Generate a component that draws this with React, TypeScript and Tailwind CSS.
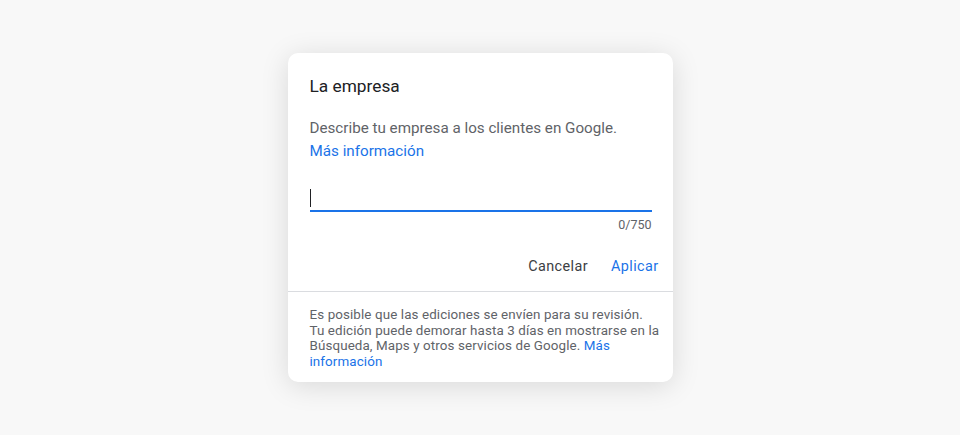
export default function App() {
  return (
    <div
      className="min-h-[435px] bg-[#f8f8f8] flex justify-center pt-[53px]"
      style={{ fontFamily: "Roboto, 'Liberation Sans', sans-serif" }}
    >
      <div className="w-[385px] h-[329px] bg-white rounded-[10px] shadow-[0_4px_28px_rgba(0,0,0,0.13)] flex flex-col">
        <div className="pl-[22px] pr-[21px] pt-[21px]">
          <h2 className="text-[17.3px] leading-6 text-[#202124]">La empresa</h2>
          <p className="mt-[19px] text-[15.2px] leading-[23px] text-[#5f6368]">
            Describe tu empresa a los clientes en Google.
            <br />
            <a className="text-[#1a73e8]">Más información</a>
          </p>
          {/* campo de texto */}
          <div className="mt-[20px] h-[29px] border-b-2 border-[#1a73e8] flex items-start">
            <span className="mt-[6px] w-[1.5px] h-[18px] bg-[#202124]" />
          </div>
          <div className="mt-[5px] text-right text-[12.5px] leading-4 text-[#5f6368]">0/750</div>
        </div>
        <div className="flex justify-end items-center gap-[23px] pr-[14px] mt-[16px] h-[36px]">
          <button className="text-[14.4px] tracking-[0.4px] text-[#3c4043]">Cancelar</button>
          <button className="text-[14.4px] tracking-[0.4px] text-[#1a73e8]">Aplicar</button>
        </div>
        <div className="mt-[6px] border-t border-[#dadce0] pl-[22px] pt-[15px] text-[13.4px] leading-[15.7px] text-[#5f6368] tracking-[0.1px] whitespace-nowrap">
          Es posible que las ediciones se envíen para su revisión.
          <br />
          Tu edición puede demorar hasta 3 días en mostrarse en la
          <br />
          Búsqueda, Maps y otros servicios de Google. <a className="text-[#1a73e8]">Más</a>
          <br />
          <a className="text-[#1a73e8]">información</a>
        </div>
      </div>
    </div>
  );
}
